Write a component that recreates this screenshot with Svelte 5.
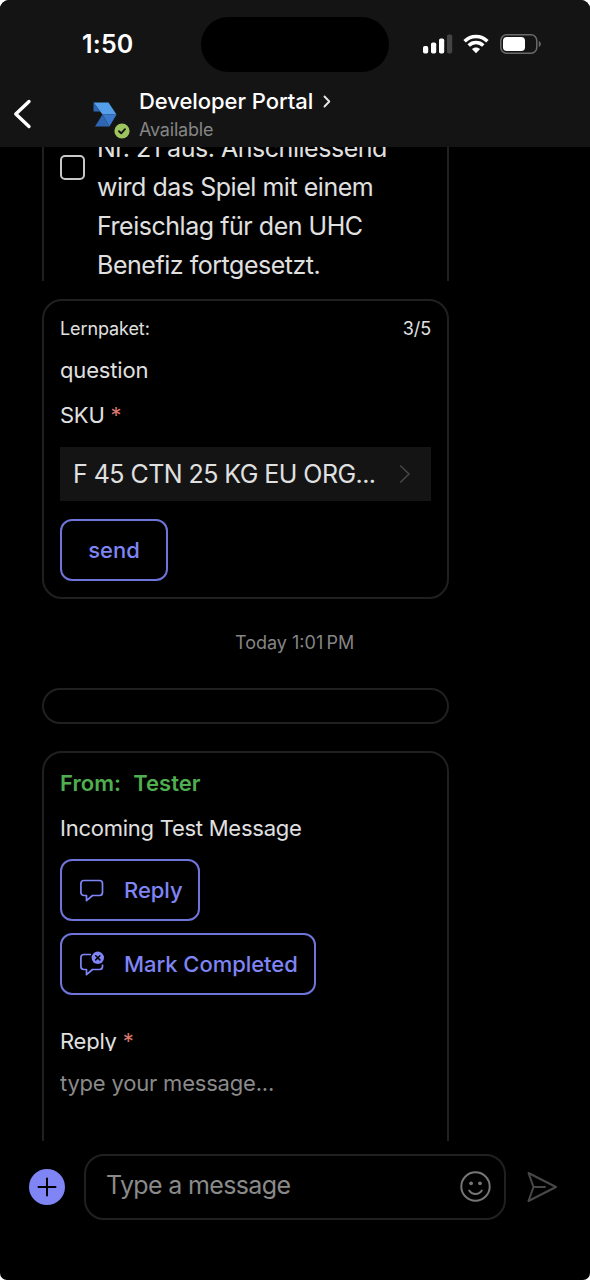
<script lang="ts">
  const contact = { name: 'Developer Portal', status: 'Available' };

  const task = ['Nr. 21 aus. Anschliessend', 'wird das Spiel mit einem', 'Freischlag für den UHC', 'Benefiz fortgesetzt.'];

  const bars = [7.5, 11, 15, 19];

  let checked = $state(false);
  let draft = $state('');
  let reply = $state('');

  function toggleTask() { checked = !checked; }
</script>

<div class="phone">
  <header>
    <div class="status-bar">
      <span class="time">1:50</span>
      <div class="island"></div>
      <div class="indicators">
        <svg class="signal" width="30" height="20" viewBox="0 0 30 20">
          {#each bars as h, i}
            <rect x={i * 8} y={19.5 - h} width="5.2" height={h} rx="1.7" fill={i < 3 ? '#fff' : '#444'} />
          {/each}
        </svg>
        <svg class="wifi" width="26" height="20" viewBox="0 0 26 20">
          <g fill="none" stroke="#fff" stroke-width="3.5">
            <path d="M1.6 7.2C8 .9 18 .9 24.4 7.2" />
            <path d="M5.7 11.5C9.8 7.5 16.2 7.5 20.3 11.5" />
          </g>
          <path d="M13 19.3L8.9 15.1C11.2 13 14.8 13 17.1 15.1Z" fill="#fff" />
        </svg>
        <svg class="battery" width="42" height="20" viewBox="0 0 42 20">
          <rect x=".8" y=".8" width="36" height="18.4" rx="5.8" fill="none" stroke="#6a6a6a" stroke-width="1.5" />
          <rect x="3" y="3" width="22" height="14" rx="3.8" fill="#fff" />
          <path d="M38.8 7v6c1.3-.5 2-1.7 2-3s-.7-2.5-2-3z" fill="#6a6a6a" />
        </svg>
      </div>
    </div>
    <div class="nav">
      <button class="back" aria-label="Back">
        <svg width="20" height="32" viewBox="0 0 20 32">
          <path d="M17 3.5L3.8 16L17 28.5" fill="none" stroke="#fff" stroke-width="3.4" stroke-linecap="round" stroke-linejoin="round" />
        </svg>
      </button>
      <div class="avatar">
        <svg width="24" height="25" viewBox="0 0 24 25">
          <path d="M.5 .5H15.5L23.5 12.5H9.5Z" fill="#559eea" />
          <path d="M.5 .5V9.5H7.2Z" fill="#2f66b4" />
          <path d="M9.5 12.5H23.5L16.5 24.5Z" fill="#3a78cb" />
          <path d="M9.5 12.5L2 24.5H16.5Z" fill="#2f66b4" />
        </svg>
        <svg class="presence" width="16" height="16" viewBox="0 0 16 16">
          <circle cx="8" cy="8" r="7.6" fill="#9dc45f" />
          <path d="M5 8.2L7.2 10.3L11 6.2" fill="none" stroke="#141414" stroke-width="1.9" stroke-linecap="round" stroke-linejoin="round" />
        </svg>
      </div>
      <div class="contact">
        <div class="name">
          <span>{contact.name}</span>
          <svg width="8" height="13" viewBox="0 0 8 13">
            <path d="M1.5 1.5L6.3 6.5L1.5 11.5" fill="none" stroke="#e8e8e8" stroke-width="1.9" stroke-linecap="round" stroke-linejoin="round" />
          </svg>
        </div>
        <div class="availability">{contact.status}</div>
      </div>
    </div>
  </header>

  <main>
    <section class="card task">
      <button class="checkbox" class:checked role="checkbox" aria-checked={checked} aria-label="Task" onclick={toggleTask}></button>
      <p class="task-text">
        {#each task as line}<span>{line}</span>{/each}
      </p>
    </section>

    <section class="card lesson">
      <div class="lesson-head">
        <span class="package">Lernpaket:</span>
        <span class="count">3/5</span>
      </div>
      <p class="question">question</p>
      <p class="label sku"><span>SKU</span> <span class="req">*</span></p>
      <button class="select">
        <span>F 45 CTN 25 KG EU ORG...</span>
        <svg width="12" height="20" viewBox="0 0 12 20">
          <path d="M1.2 1.5L10 10L1.2 18.5" fill="none" stroke="#484848" stroke-width="1.5" />
        </svg>
      </button>
      <button class="btn send">send</button>
    </section>

    <div class="timestamp">Today 1:01&#8201;PM</div>

    <section class="card empty"></section>

    <section class="card message">
      <p class="from"><span>From:</span><span>Tester</span></p>
      <p class="body">Incoming Test Message</p>
      <button class="btn reply">
        <svg width="26" height="26" viewBox="0 0 26 26">
          <path d="M4.9 3.5H20.5A3 3 0 0 1 23.500 6.500V15.500A3 3 0 0 1 20.500 18.500H13.500L7.500 23.700V18.500H4.900A3 3 0 0 1 1.900 15.500V6.500A3 3 0 0 1 4.900 3.500Z" fill="none" stroke="currentColor" stroke-width="1.7" stroke-linejoin="round" />
        </svg>
        <span>Reply</span>
      </button>
      <button class="btn complete">
        <svg width="26" height="26" viewBox="0 0 26 26">
          <path d="M12 3.5H4.9A3 3 0 0 0 1.900 6.500V15.500A3 3 0 0 0 4.900 18.500H7.500V23.700L13.500 18.500H20.500A3 3 0 0 0 23.500 15.500V13.500" fill="none" stroke="currentColor" stroke-width="1.7" stroke-linejoin="round" />
          <circle cx="18.8" cy="6.8" r="6.2" fill="currentColor" />
          <path d="M16.7 4.7L20.9 8.9M20.9 4.7L16.7 8.9" stroke="#000" stroke-width="1.5" stroke-linecap="round" />
        </svg>
        <span>Mark Completed</span>
      </button>
      <p class="label reply-label"><span>Reply</span> <span class="req">*</span></p>
      <input class="reply-input" bind:value={reply} placeholder="type your message..." />
    </section>
  </main>

  <footer>
    <button class="add" aria-label="Add">
      <svg width="36" height="36" viewBox="0 0 36 36">
        <circle cx="18" cy="18" r="18" fill="#7f85f5" />
        <path d="M18 9.5V26.5M9.5 18H26.5" stroke="#000" stroke-width="2" stroke-linecap="round" />
      </svg>
    </button>
    <div class="composer">
      <input bind:value={draft} placeholder="Type a message" />
      <svg width="31" height="31" viewBox="0 0 31 31">
        <circle cx="15.5" cy="15.5" r="14.2" fill="none" stroke="#767676" stroke-width="2" />
        <circle cx="11.1" cy="12.3" r="1.9" fill="#767676" />
        <circle cx="20" cy="12.3" r="1.9" fill="#767676" />
        <path d="M9.2 19.5C12.2 24.2 18.8 24.2 21.8 19.5" fill="none" stroke="#767676" stroke-width="2" stroke-linecap="round" />
      </svg>
    </div>
    <button class="submit" aria-label="Send">
      <svg width="32" height="32" viewBox="0 0 32 32">
        <path d="M2.5 2L30 16L2.5 30L7.5 16ZM7.5 16H19" fill="none" stroke="#484848" stroke-width="2" stroke-linecap="round" stroke-linejoin="round" />
      </svg>
    </button>
  </footer>
</div>

<style>
  :global(body) { background: #fff; }
  * { box-sizing: border-box; }
  p { margin: 0; }
  button { font: inherit; color: inherit; background: none; border: 0; padding: 0; cursor: pointer; }
  svg { display: block; flex-shrink: 0; }
  input { font: inherit; letter-spacing: inherit; background: none; border: 0; padding: 0; outline: 0; color: #e0e0e0; min-width: 0; }
  input::placeholder { color: #8a8a8a; opacity: 1; }

  .phone {
    width: 590px;
    height: 1280px;
    display: flex;
    flex-direction: column;
    overflow: hidden;
    border-radius: 9px 9px 7px 7px;
    background: #000;
    color: #e0e0e0;
    font-family: Inter, "Liberation Sans", sans-serif;
    font-size: 22px;
    white-space: nowrap;
  }

  header { height: 147px; flex-shrink: 0; background: #141414; }
  .status-bar { display: flex; height: 72px; padding-top: 17px; }
  .time { width: 201px; padding-left: 82px; font-size: 25px; font-weight: 600; line-height: 55px; letter-spacing: 0.2px; color: #fff; }
  .island { width: 188px; height: 55px; border-radius: 28px; background: #000; }
  .indicators { display: flex; padding: 17px 0 0 34px; }
  .wifi { margin-left: 10px; }
  .battery { margin-left: 11px; }

  .nav { display: flex; height: 75px; }
  .back { margin: 26px 0 0 12px; align-self: flex-start; }
  .avatar { position: relative; width: 46px; margin: 30px 0 0 61px; }
  .presence { position: absolute; left: 21px; top: 21px; }
  .name { display: flex; align-items: center; gap: 10px; margin-top: 15px; font-size: 22px; font-weight: 500; line-height: 28px; letter-spacing: -0.05px; color: #fff; }
  .availability { font-size: 18px; line-height: 24px; margin-top: 3px; letter-spacing: -0.2px; color: #858585; }

  main { height: 994px; padding-left: 42px; overflow: hidden; display: flex; flex-direction: column; }
  .card { width: 407px; flex-shrink: 0; border: 2px solid #202020; border-radius: 20px; padding: 0 16px; }

  .task { display: flex; height: 134px; border-width: 0 2px; border-radius: 0; overflow: hidden; gap: 12px; }
  .checkbox { width: 25px; height: 25px; flex-shrink: 0; margin-top: 8px; border: 2px solid #c8c8c8; border-radius: 5px; }
  .checkbox.checked { background: #7f85f5; }
  .task-text { display: flex; flex-direction: column; margin-top: -18px; font-size: 25px; line-height: 39px; letter-spacing: -0.47px; }

  .lesson { height: 300px; margin-top: 18px; }
  .lesson-head { display: flex; justify-content: space-between; margin-top: 16px; font-size: 18px; line-height: 24px; letter-spacing: -0.1px; }
  .question { margin-top: 14px; line-height: 30px; letter-spacing: -0.15px; }
  .label { line-height: 30px; letter-spacing: -0.25px; }
  .sku { margin-top: 15px; }
  .req { color: #d9776f; }
  .select { display: flex; align-items: center; justify-content: space-between; width: 371px; height: 54px; margin-top: 17px; padding: 0 20px 0 13px; background: #141414; font-size: 25px; letter-spacing: -0.55px; }
  .btn { display: flex; align-items: center; height: 62px; border: 2px solid #6f74d8; border-radius: 12px; color: #7f85f5; font-weight: 500; padding: 0 17px; gap: 19px; letter-spacing: -0.05px; }
  .send { width: 108px; justify-content: center; margin-top: 18px; }

  .timestamp { align-self: flex-start; margin: 32px 0 0 193px; font-size: 18px; line-height: 24px; color: #858585; }
  .empty { height: 36px; margin-top: 33px; border-radius: 18px; }

  .message { height: 420px; margin-top: 27px; }
  .from { display: flex; gap: 12px; margin-top: 15px; line-height: 30px; font-weight: 600; letter-spacing: 0.05px; color: #4fae4f; }
  .body { margin-top: 15px; line-height: 30px; letter-spacing: -0.25px; }
  .reply { width: 140px; margin-top: 16px; }
  .complete { width: 256px; margin-top: 12px; }
  .reply-label { height: 25px; margin-top: 31px; overflow: hidden; }
  .reply-input { display: block; width: 100%; height: 30px; margin-top: 17px; letter-spacing: -0.2px; }

  footer { display: flex; height: 139px; padding: 13px 0 0 29px; }
  .add { height: 36px; margin-top: 15px; }
  .composer { display: flex; align-items: center; justify-content: space-between; width: 422px; height: 66px; margin-left: 19px; padding: 0 13px 0 20px; border: 2px solid #202020; border-radius: 20px; }
  .composer input { width: 300px; font-size: 25px; padding-bottom: 5px; letter-spacing: -0.65px; }
  .composer svg { margin-bottom: 1px; }
  .submit { height: 32px; margin: 17px 0 0 20px; }
</style>
